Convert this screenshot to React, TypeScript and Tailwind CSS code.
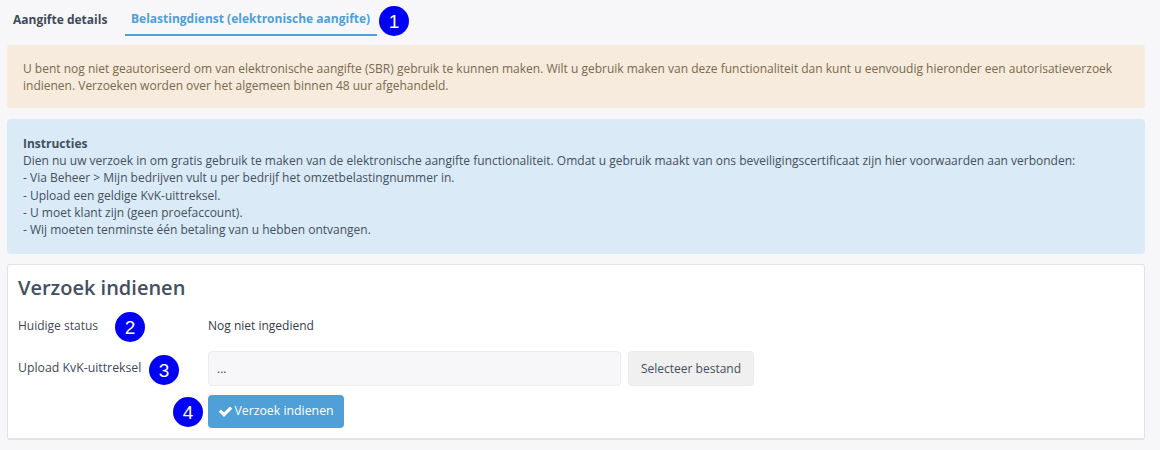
function Marker({ n, className }: { n: number; className: string }) {
  return (
    <span
      className={`absolute flex h-[30px] w-[30px] items-center justify-center rounded-full bg-[#0000f5] text-[19px] leading-none text-white font-['Liberation_Sans',sans-serif] ${className}`}
    >
      {n}
    </span>
  );
}

function CheckIcon() {
  return (
    <svg width="15" height="15" viewBox="0 0 1792 1792" fill="currentColor">
      <path d="M1671 566q0 40-28 68l-724 724-136 136q-28 28-68 28t-68-28l-136-136-362-362q-28-28-28-68t28-68l136-136q28-28 68-28t68 28l294 295 656-657q28-28 68-28t68 28l136 136q28 28 28 68z" />
    </svg>
  );
}

export default function App() {
  return (
    <main className="h-[450px] w-[1160px] overflow-hidden bg-[#f7f7f9] px-[7px] font-['Open_Sans',sans-serif] text-[12px] text-[#3f4a59]">
      <nav className="relative flex h-[45px] items-start">
        <div className="flex h-[36px] w-[118px] items-center pl-[6px] pt-[4px] font-bold text-[#3f4a59]">
          Aangifte details
        </div>
        <div className="flex h-[36px] w-[252px] items-center border-b-2 border-[#4f9fd8] pl-[6px] pt-[4px] font-bold text-[#4f9fd8]">
          Belastingdienst (elektronische aangifte)
        </div>
        <Marker n={1} className="left-[372px] top-[6px]" />
      </nav>

      <section className="mb-[11px] h-[63px] w-[1138px] rounded-[4px] bg-[#f6ebdc] px-[16px] pt-[15px] leading-[17px] text-[#7a6a4f]">
        U bent nog niet geautoriseerd om van elektronische aangifte (SBR) gebruik te kunnen maken. Wilt u gebruik maken van deze functionaliteit dan kunt u eenvoudig hieronder een autorisatieverzoek
        <br />
        indienen. Verzoeken worden over het algemeen binnen 48 uur afgehandeld.
      </section>

      <section className="mb-[10px] h-[135px] w-[1138px] rounded-[4px] bg-[#daeaf6] px-[16px] pt-[16px] leading-[17.2px] text-[#44505f]">
        <strong className="font-bold">Instructies</strong>
        <br />
        Dien nu uw verzoek in om gratis gebruik te maken van de elektronische aangifte functionaliteit. Omdat u gebruik maakt van ons beveiligingscertificaat zijn hier voorwaarden aan verbonden:
        <br />- Via Beheer &gt; Mijn bedrijven vult u per bedrijf het omzetbelastingnummer in.
        <br />- Upload een geldige KvK-uittreksel.
        <br />- U moet klant zijn (geen proefaccount).
        <br />- Wij moeten tenminste één betaling van u hebben ontvangen.
      </section>

      <section className="relative h-[176px] w-[1138px] rounded-[3px] border border-b-2 border-[#e3e3e6] bg-white px-[10px] pt-[10px]">
        <h2 className="mb-[13px] text-[20px] font-semibold leading-[26px] text-[#444f5e]">
          Verzoek indienen
        </h2>

        <div className="flex h-[24px] items-center">
          <span className="w-[190px]">Huidige status</span>
          <span className="text-[#333c48]">Nog niet ingediend</span>
        </div>

        <div className="mt-[13px] flex items-center">
          <span className="w-[190px] text-[12.3px]">Upload KvK-uittreksel</span>
          <div className="flex h-[35px] w-[413px] items-center rounded-[4px] border border-[#ececef] bg-[#f7f7f9] px-[8px]">
            ...
          </div>
          <button className="ml-[7px] h-[35px] w-[126px] rounded-[4px] border border-[#ebebeb] bg-[#f0f0f0] text-[#444f5e]">
            Selecteer bestand
          </button>
        </div>

        <div className="mt-[9px] pl-[190px]">
          <button className="flex h-[33px] w-[136px] items-center justify-center gap-[1px] rounded-[4px] bg-[#4f9fd8] text-[12.3px] text-white">
            <CheckIcon />
            Verzoek indienen
          </button>
        </div>

        <Marker n={2} className="left-[107px] top-[47px]" />
        <Marker n={3} className="left-[141px] top-[90px]" />
        <Marker n={4} className="left-[165px] top-[132px]" />
      </section>
    </main>
  );
}
